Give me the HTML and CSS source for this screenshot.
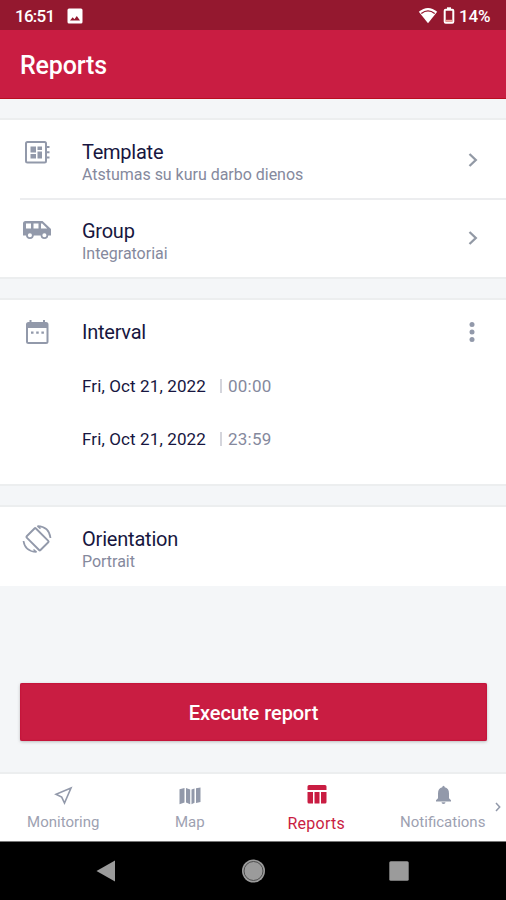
FILE: index.html
```html
<!DOCTYPE html>
<html lang="en">
<head>
<meta charset="utf-8">
<title>Reports</title>
<link rel="stylesheet" href="styles.css">
</head>
<body>
<div class="status">
  <span class="clock">16:51</span>
  <svg class="shot" width="16" height="16" viewBox="0 0 16 16"><path fill="#fff" fill-rule="evenodd" d="M2 .5h12q1.500 0 1.500 1.500v12q0 1.500-1.500 1.500H2Q.5 15.500.5 14V2Q.5.500 2 .5zM3 12.500h10L9.800 8l-2.400 3.200-1.700-2z"/></svg>
  <span class="grow"></span>
  <svg class="wifi" width="20" height="18" viewBox="0 0 20 18"><path fill="#fff" d="M.8 4.800Q10-3 19.200 4.800L10 16.300z"/><path fill="none" stroke="#94182f" stroke-width="1.300" d="M3.300 6.600Q10 1.300 16.700 6.600"/></svg>
  <svg class="battery" width="12" height="18" viewBox="0 0 12 18"><rect fill="none" stroke="#fff" stroke-width="2" x="1.700" y="2.800" width="8.600" height="13" rx="1"/><path fill="#fff" d="M4 .3h4v2.500H4z"/><path fill="#f3a79d" d="M2.700 12.800h6.600v2H2.700z"/></svg>
  <span class="percent">14%</span>
</div>
<header class="appbar"><h1>Reports</h1></header>
<main>
  <section class="card">
    <div class="row">
      <svg class="icon" width="30" height="30" viewBox="0 0 30 30"><g fill="none" stroke="#9299aa" stroke-width="2"><rect x="4" y="5" width="20" height="20.500" rx="1.500"/><path d="M24 10h3.500M24 15.200h3.500M24 20.400h3.500"/></g><path fill="#9299aa" d="M8.500 9.500h5.500v6H8.500zm7 0H20v3.500h-4.500zm-7 7.500H14v4.500H8.500zm7-2.500H20v7h-4.500z"/></svg>
      <div class="copy"><h2>Template</h2><p>Atstumas su kuru darbo dienos</p></div>
      <svg class="chevron" width="12" height="16" viewBox="0 0 12 16"><path d="M2.500 2L8.800 8l-6.300 6"/></svg>
    </div>
    <div class="row divided">
      <svg class="icon" width="30" height="30" viewBox="0 0 30 30"><path fill="#9299aa" fill-rule="evenodd" d="M3.500 6H20.500l8.500 8v6.500h-2.800a3.700 3.700 0 0 1-7.200 0h-7.500a3.700 3.700 0 0 1-7.200 0H1V8.500Q1 6 3.500 6zM4 8.500v5h5v-5zm7.500 0v5h5v-5zm7.500 0v5h6.200l-5-5z"/><g fill="#fff" stroke="#9299aa" stroke-width="1.700"><circle cx="7.900" cy="20.300" r="2.900"/><circle cx="22.400" cy="20.300" r="2.900"/></g></svg>
      <div class="copy"><h2>Group</h2><p>Integratoriai</p></div>
      <svg class="chevron" width="12" height="16" viewBox="0 0 12 16"><path d="M2.500 2L8.800 8l-6.300 6"/></svg>
    </div>
  </section>
  <section class="card interval">
    <div class="row">
      <svg class="icon" width="30" height="30" viewBox="0 0 30 30"><path fill="#9299aa" fill-rule="evenodd" d="M7.500 3h2v2h11.500V3h2v2h1q2.500 0 2.500 2.500v17q0 2.500-2.500 2.500H6.500Q4 27 4 24.500v-17Q4 5 6.500 5h1zM6 11v14h18.500V11z"/><path fill="#9299aa" d="M9 14.500h2.500v2.200H9zm5.200 0h2.500v2.200h-2.500zm5.200 0h2.500v2.200h-2.500z"/></svg>
      <div class="copy"><h2>Interval</h2></div>
      <svg class="dots" width="8" height="22" viewBox="0 0 8 22"><circle cx="4" cy="3.500" r="2.500"/><circle cx="4" cy="11" r="2.500"/><circle cx="4" cy="18.500" r="2.500"/></svg>
    </div>
    <div class="date"><span class="day">Fri, Oct 21, 2022</span><i></i><span class="time">00:00</span></div>
    <div class="date"><span class="day">Fri, Oct 21, 2022</span><i></i><span class="time">23:59</span></div>
  </section>
  <section class="card orientation">
    <div class="row">
      <svg class="icon" width="30" height="30" viewBox="0 0 30 30"><g fill="none" stroke="#9299aa" stroke-width="1.900"><rect x="9" y="5.500" width="13" height="19.500" rx="1" transform="rotate(-45 15.500 15.250)"/><path d="M15.500 2.200Q27 2.500 28.500 14M14.500 28Q3 27.500 1.500 17" stroke-width="1.700"/><path d="M15.500 2.200l3 2.500M14.500 28l-3-2.500" stroke-width="1.500"/></g></svg>
      <div class="copy"><h2 class="wide">Orientation</h2><p>Portrait</p></div>
    </div>
  </section>
  <button class="execute">Execute report</button>
</main>
<nav class="tabs">
  <div class="tab"><svg width="24" height="24" viewBox="0 0 24 24"><path fill="none" stroke="#9299aa" stroke-width="1.600" d="M20 4L5 10.300l5.700 2.800 2.800 6z"/></svg><span>Monitoring</span></div>
  <div class="tab"><svg width="24" height="24" viewBox="0 0 24 24"><path fill="#9299aa" d="M1.500 5.200L6.500 4v14.500l-5 1.800zM8 4l4.200 1.500v14.800L8 18.500zM13.500 5.500l3-1v14.300l-3 1.500zM18 4.300L22.500 3.500v14.500L18 19z"/></svg><span>Map</span></div>
  <div class="tab active"><svg width="24" height="24" viewBox="0 0 24 24"><path fill="#c91d42" d="M5 1h16q1.500 0 1.500 1.500V6h-19V2.500Q3.500 1 5 1zM3.500 8H9v11.500H5Q3.500 19.500 3.500 18zm7 0h5v11.500h-5zM17 8h5.500v10q0 1.500-1.500 1.500h-4z"/></svg><span>Reports</span></div>
  <div class="tab"><svg width="24" height="24" viewBox="0 0 24 24"><path fill="#9299aa" d="M11.300 3.300q0-1.500 1.200-1.500t1.200 1.500q4.300 1 4.300 6.200v4.800l2 1.900v1.300H5v-1.300l2-1.900v-4.800q0-5.200 4.300-6.200zM10.500 18.300h4q0 1.800-2 1.800t-2-1.800"/></svg><span>Notifications</span></div>
  <svg class="more" width="8" height="12" viewBox="0 0 8 12"><path fill="none" stroke="#9299aa" stroke-width="1.500" d="M2 2l3.700 4L2 10"/></svg>
</nav>
<footer class="system">
  <svg width="20" height="22" viewBox="0 0 20 22"><path fill="#9b9b9b" d="M.5 11L19 .5v21z"/></svg>
  <svg width="24" height="24" viewBox="0 0 24 24"><circle cx="12.500" cy="12" r="11.500" fill="#9b9b9b"/><circle cx="12.500" cy="12" r="9.500" fill="none" stroke="#4c4c4c"/></svg>
  <svg width="20" height="20" viewBox="0 0 20 20"><rect x=".3" y=".3" width="19.400" height="19.400" rx="1.500" fill="#9b9b9b"/></svg>
</footer>
</body>
</html>
```
FILE: styles.css
```css
* { box-sizing: border-box; }
body { margin: 0; width: 506px; height: 900px; display: flex; flex-direction: column; overflow: hidden; background: #f4f6f8; font-family: Roboto, "Liberation Sans", sans-serif; color: #171640; }
svg { display: block; flex: none; }
h1, h2, p { margin: 0; font-weight: 400; }
.status { height: 30px; flex: none; display: flex; align-items: center; padding: 1px 14px 0 15px; background: #94182f; color: #fff; font: 500 17px/20px Roboto, sans-serif; }
.clock { width: 52px; letter-spacing: -.75px; }
.grow { flex: 1; }
.wifi { margin-right: 5px; }
.battery { margin-right: 4px; }
.percent { width: 33px; letter-spacing: -.1px; white-space: nowrap; }
.appbar { height: 69px; flex: none; padding: 21px 20px; background: #c91d42; border-bottom: 1px solid #b90e20; color: #fff; }
.appbar h1 { font-size: 25px; line-height: 30px; font-weight: 500; letter-spacing: -.15px; }
main { flex: 1; display: flex; flex-direction: column; padding-top: 19px; }
.card { flex: none; height: 161px; margin-bottom: 20px; background: #fff; border-top: 2px solid #eceeef; border-bottom: 2px solid #eceeef; }
.row { height: 79px; display: flex; align-items: flex-start; padding: 17px 27px 0 22px; }
.divided { position: relative; height: 78px; }
.divided::before { content: ""; position: absolute; top: -1px; left: 20px; right: 0; height: 2px; background: #ecedef; }
.copy { margin-left: 30px; padding-top: 3px; flex: 1; }
h2 { font-size: 20px; line-height: 24px; letter-spacing: -.25px; white-space: nowrap; }
.wide { letter-spacing: -.2px; }
p { font-size: 16px; line-height: 20px; padding-top: 1px; color: #85899d; letter-spacing: -.02px; white-space: nowrap; }
.chevron { margin-top: 15px; }
.chevron path { fill: none; stroke: #9299a5; stroke-width: 2.3; }
.dots { margin: 4px 3px 0 0; fill: #9299aa; }
.divided .icon { margin-top: -1px; }
.divided .chevron { margin-top: 14px; }
.interval { height: 188px; margin-top: -1px; }
.interval .row { height: 59px; }
.date { display: flex; align-items: center; height: 53px; padding-left: 82px; font-size: 17px; line-height: 20px; letter-spacing: .12px; }
.date i { width: 2px; height: 14px; margin: 0 6px 0 14px; background: #d4d5dc; }
.time { color: #85899d; letter-spacing: .25px; }
.orientation { height: 81px; margin: -1px 0 97px; border-bottom: 0; }
.execute { flex: none; display: block; width: 467px; height: 58px; margin: 0 0 0 20px; border: 0; border-radius: 2px; background: #c91d42; box-shadow: inset 0 0 2px #b9002d, 0 1px 3px #8888; color: #fff; font: 500 20px/58px Roboto, sans-serif; letter-spacing: -.05px; padding: 1px 0 0; }
.tabs { position: relative; flex: none; height: 70px; display: grid; grid-template-columns: repeat(4, 126.5px); background: #fff; border-top: 2px solid #eceeef; border-bottom: 1px solid #777; }
.tab { display: flex; flex-direction: column; align-items: center; padding-top: 10px; color: #9da1b1; font-size: 15px; line-height: 18px; }
.tab span { margin-top: 5px; }
.active { color: #c91d42; }
.active span { font-size: 16px; margin-top: 7px; letter-spacing: .25px; }
.more { position: absolute; right: 4px; top: 27px; }
.system { flex: none; height: 58px; display: flex; align-items: center; justify-content: space-between; background: #000; padding: 0 97px 0 96px; }
```
